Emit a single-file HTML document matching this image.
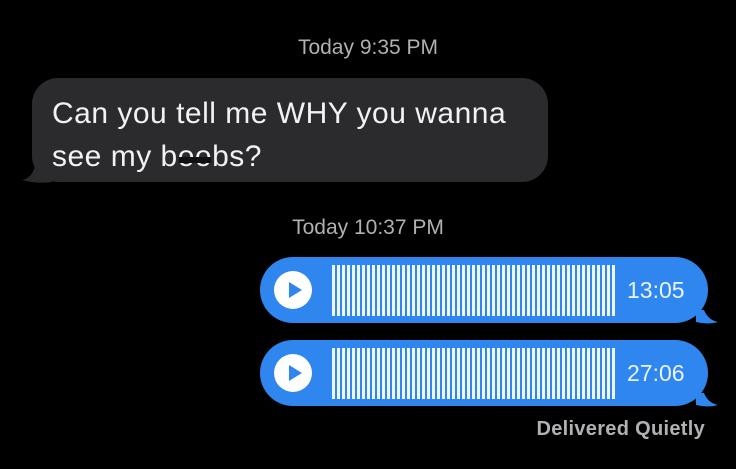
<!DOCTYPE html>
<html><head><meta charset="utf-8"><style>
body{margin:0;width:736px;height:469px;background:#000;overflow:hidden;font-family:"Liberation Sans",sans-serif;position:relative}
.ts{position:absolute;left:0;width:736px;text-align:center;color:#b0b0b5;font-size:21px}
.gray{position:absolute;left:32px;top:78px;width:516px;height:104px;background:#2b2b2e;border-radius:26px}
.gray .t{position:absolute;left:20px;top:14px;color:#f2f2f2;font-size:30px;letter-spacing:0.5px;line-height:43px;white-space:nowrap}
.tailg{position:absolute;left:22px;top:160px;width:30px;height:24px}
.blue{position:absolute;left:260px;width:448px;height:66px;background:#2f86ee;border-radius:33px}
.play{position:absolute;left:14px;top:14px;width:38px;height:38px;border-radius:50%;background:#fff}
.play:after{content:"";position:absolute;left:15px;top:11px;border-left:13px solid #2f86ee;border-top:8px solid transparent;border-bottom:8px solid transparent}
.wave{position:absolute;left:72px;top:8px;width:284px;height:51px;background:repeating-linear-gradient(90deg,#eef6ff 0 3px,transparent 3px 5px)}
.time{position:absolute;left:367px;top:20px;color:#eaf3ff;font-size:23px}
.tailb{position:absolute;left:696px;width:22px;height:14px}
.del{position:absolute;right:31px;top:418px;color:#b0b0b5;font-size:20px;font-weight:bold;letter-spacing:0.3px}
.r{position:relative;display:inline-block}
.r i{position:absolute;left:1px;right:1px;top:22px;height:6px;background:#111}
</style></head><body>
<div class="ts" style="top:36px">Today 9:35 PM</div>
<svg class="tailg" viewBox="0 0 30 24"><path d="M0 20 Q12 18 14 0 L30 0 L30 22 Q14 24 0 20Z" fill="#2b2b2e"/></svg>
<div class="gray"><div class="t">Can you tell me WHY you wanna<br>see my b<span class="r">oo<i></i></span>bs?</div></div>
<div class="ts" style="top:216px">Today 10:37 PM</div>
<svg class="tailb" style="top:310px" viewBox="0 0 22 14"><path d="M22 12 Q12 10 8 0 L0 0 L0 12 Q12 15 22 12Z" fill="#2f86ee"/></svg>
<div class="blue" style="top:257px"><div class="play"></div><div class="wave"></div><div class="time">13:05</div></div>
<svg class="tailb" style="top:393px" viewBox="0 0 22 14"><path d="M22 12 Q12 10 8 0 L0 0 L0 12 Q12 15 22 12Z" fill="#2f86ee"/></svg>
<div class="blue" style="top:340px"><div class="play"></div><div class="wave"></div><div class="time">27:06</div></div>
<div class="del">Delivered Quietly</div>
</body></html>
